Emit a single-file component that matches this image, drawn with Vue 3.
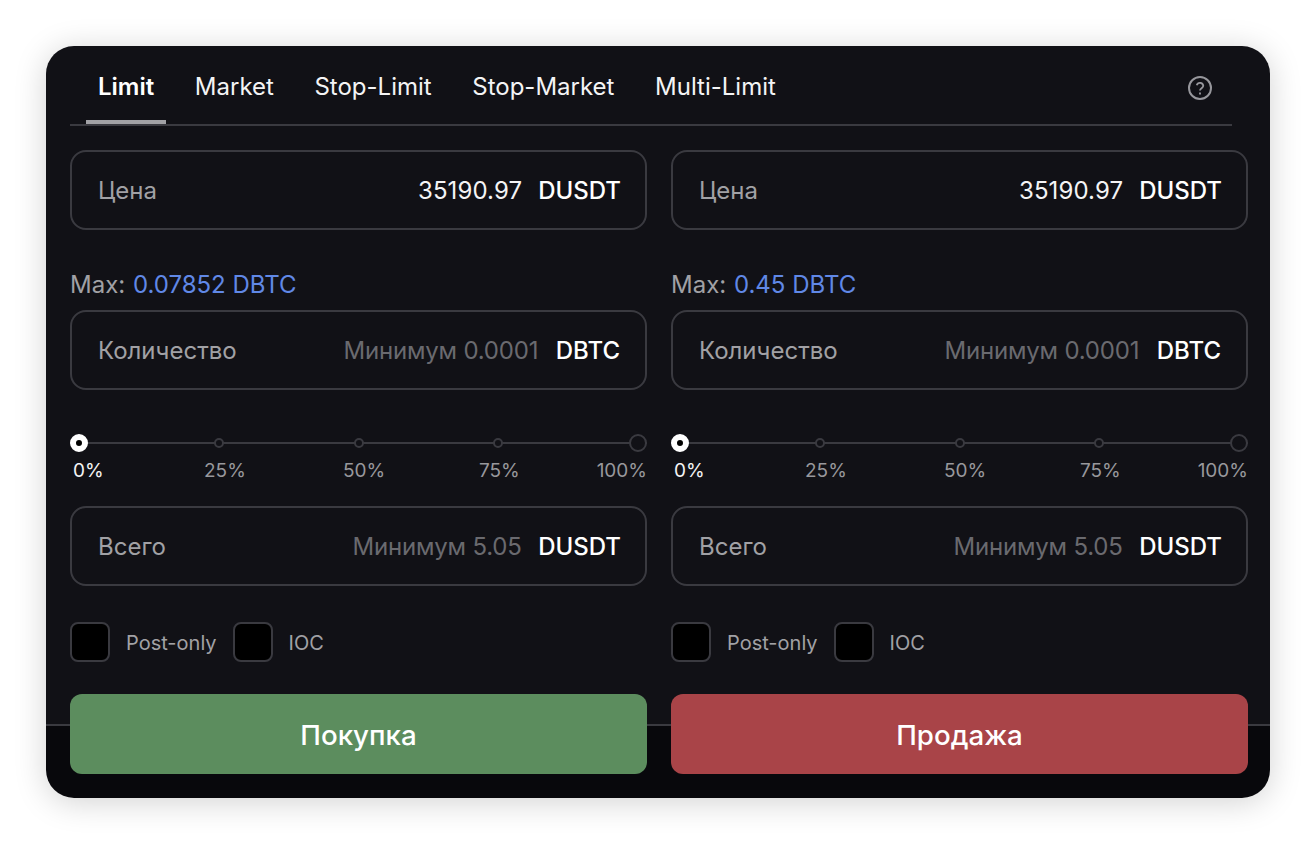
<script setup>
const tabs = ['Limit', 'Market', 'Stop-Limit', 'Stop-Market', 'Multi-Limit']
const marks = ['0%', '25%', '50%', '75%', '100%']
const sides = [
  { max: '0.07852 DBTC', action: 'Покупка', kind: 'buy' },
  { max: '0.45 DBTC', action: 'Продажа', kind: 'sell' }
]
</script>

<template>
  <div class="page">
    <section class="panel">
      <header class="tabs">
        <button v-for="(t, i) in tabs" :key="t" class="tab" :class="{ active: i === 0 }">{{ t }}</button>
        <svg class="help" width="26" height="26" viewBox="0 0 26 26" fill="none" stroke="#97979c" stroke-width="2">
          <circle cx="13" cy="13" r="11" />
          <path d="M9.7 10.2a3.4 3.4 0 0 1 6.6 0.6c0 2.2-3.3 2.6-3.3 4.6" stroke-width="1.8" />
          <path d="M13 17.6v1.9" stroke-width="1.9" />
        </svg>
      </header>
      <div class="columns">
        <div v-for="s in sides" :key="s.kind" class="side">
          <div class="field">
            <span class="label">Цена</span>
            <span class="value">35190.97</span>
            <span class="unit">DUSDT</span>
          </div>
          <div class="max">Max: <span class="max-val">{{ s.max }}</span></div>
          <div class="field qty">
            <span class="label">Количество</span>
            <span class="hint">Минимум 0.0001</span>
            <span class="unit">DBTC</span>
          </div>
          <div class="slider">
            <div class="track">
              <span v-for="(m, i) in marks" :key="m" class="slot">
                <i class="dot" :class="{ first: i === 0, last: i === 4 }"></i>
              </span>
            </div>
            <div class="marks">
              <span v-for="(m, i) in marks" :key="m" class="mark" :class="{ on: i === 0 }">{{ m }}</span>
            </div>
          </div>
          <div class="field">
            <span class="label">Всего</span>
            <span class="hint">Минимум 5.05</span>
            <span class="unit">DUSDT</span>
          </div>
          <div class="checks">
            <span class="box"></span><span class="check-label">Post-only</span>
            <span class="box"></span><span class="check-label">IOC</span>
          </div>
          <button class="action" :class="s.kind">{{ s.action }}</button>
        </div>
      </div>
    </section>
  </div>
</template>

<style scoped>
.page {
  width: 1316px;
  height: 844px;
  padding: 46px;
  box-sizing: border-box;
  background: #fff;
  font-family: Inter, "Liberation Sans", sans-serif;
}
.panel {
  width: 1224px;
  height: 752px;
  box-sizing: border-box;
  padding: 0 22px 0 24px;
  border-radius: 28px;
  background: linear-gradient(#111116 0 678px, #3a3a40 678px 680px, #08080c 680px);
  box-shadow: 0 4px 32px rgba(0, 0, 0, 0.18);
  overflow: hidden;
}
.tabs {
  width: 1162px;
  height: 80px;
  box-sizing: border-box;
  padding: 0 0 0 16px;
  display: flex;
  gap: 16.6px;
  align-items: stretch;
  border-bottom: 2px solid #3a3a40;
}
.tab {
  padding: 7px 12px 0;
  height: 78px;
  box-sizing: border-box;
  background: none;
  border: 0;
  border-bottom: 4px solid transparent;
  color: #f4f4f5;
  font: 400 24px/36px Inter, sans-serif;
}
.tab.active {
  font-weight: 600;
  border-bottom-color: #a1a1a5;
  color: #fff;
}
.help {
  margin-left: auto;
  margin-right: 19px;
  margin-top: 29px;
}
.columns {
  display: grid;
  grid-template-columns: 577px 577px;
  gap: 24px;
  padding-top: 24px;
}
.side {
  display: flex;
  flex-direction: column;
}
.field {
  height: 80px;
  box-sizing: border-box;
  border: 2px solid #3a3a40;
  border-radius: 16px;
  padding: 0 24px 0 26px;
  display: flex;
  align-items: center;
  font-size: 24px;
}
.field.qty {
  padding-right: 25px;
}
.field.qty .hint {
  margin-right: 17.5px;
}
.label {
  color: #a1a1a5;
  margin-right: auto;
}
.value {
  color: #f4f4f5;
  margin-right: 16px;
  letter-spacing: 0.1px;
}
.hint {
  color: #6a6a6f;
  margin-right: 16.5px;
  letter-spacing: -0.2px;
}
.unit {
  color: #fff;
  font-weight: 500;
}
.max {
  margin-top: 38px;
  height: 42px;
  line-height: 34px;
  font-size: 24px;
  color: #a1a1a5;
}
.max-val {
  color: #6088e6;
  margin-left: 1px;
}
.slider {
  padding-top: 44px;
  height: 116px;
  box-sizing: border-box;
}
.track {
  height: 18px;
  padding: 0 9px;
  display: flex;
  justify-content: space-between;
  align-items: center;
  background: linear-gradient(#3a3a40, #3a3a40) center / 100% 2px no-repeat;
}
.slot {
  width: 0;
  display: flex;
  justify-content: center;
}
.dot {
  flex: none;
  width: 10px;
  height: 10px;
  box-sizing: border-box;
  border: 2px solid #3a3a40;
  border-radius: 50%;
  background: #111116;
}
.dot.first {
  width: 18px;
  height: 18px;
  border: 6px solid #fff;
  background: #000;
}
.dot.last {
  width: 18px;
  height: 18px;
}
.marks {
  margin-top: 7px;
  padding: 0 0 0 3px;
  display: grid;
  grid-template-columns: 131px 139px 136px 1fr 0;
  font-size: 19px;
  line-height: 24px;
  color: #98989c;
}
.mark:last-child {
  direction: rtl;
  white-space: nowrap;
}
.mark.on {
  color: #f4f4f5;
}
.checks {
  margin-top: 36px;
  height: 72px;
  display: flex;
  align-items: flex-start;
}
.box {
  width: 40px;
  height: 40px;
  box-sizing: border-box;
  border: 2px solid #3a3a40;
  border-radius: 8px;
  background: #000;
  margin-right: 16px;
}
.check-label {
  font-size: 20px;
  line-height: 42px;
  color: #a1a1a5;
  margin-right: 16px;
}
.action {
  height: 80px;
  border: 0;
  border-radius: 12px;
  padding: 2px 0 0;
  color: #fff;
  font: 500 27.7px/78px Inter, sans-serif;
}
.buy {
  background: #5c8d5e;
}
.sell {
  background: #a94448;
}
</style>
